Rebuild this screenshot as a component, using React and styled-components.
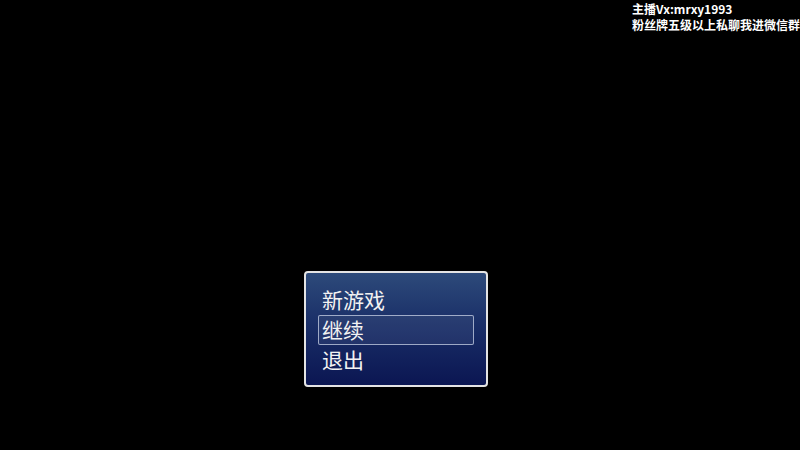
import React from 'react';
import styled, { createGlobalStyle } from 'styled-components';

const GlobalStyle = createGlobalStyle`
  html, body {
    margin: 0;
    padding: 0;
    background: #000;
  }
`;

const Screen = styled.div`
  width: 800px;
  height: 450px;
  background: #000;
  display: flex;
  flex-direction: column;
  overflow: hidden;
  font-family: "Noto Sans CJK SC", "Noto Sans", sans-serif;
`;

const Caption = styled.div`
  align-self: flex-end;
  width: 168px;
  padding-top: 1px;
  color: #fff;
  font-size: 12px;
  font-weight: 700;
  line-height: 16px;
  white-space: nowrap;
`;

const Stage = styled.div`
  flex: 1;
  display: flex;
  align-items: flex-end;
  padding: 0 0 63px 304px;
`;

const Window = styled.div`
  width: 184px;
  height: 116px;
  box-sizing: border-box;
  border: 2px solid #e4e4e4;
  border-radius: 4px;
  background: linear-gradient(to bottom, #2d4a7a 0%, #1a2f68 45%, #0b1652 100%);
  padding: 12px 12px 10px 12px;
  display: flex;
  flex-direction: column;
`;

const Item = styled.div`
  height: 30px;
  box-sizing: border-box;
  padding: 0 0 2px 3px;
  display: flex;
  align-items: center;
  color: #f2f2f2;
  font-size: 21px;
  font-weight: 400;
  border-radius: 2px;
  border: 1px solid ${({ selected }) => (selected ? 'rgba(200,210,230,0.75)' : 'transparent')};
  background: ${({ selected }) => (selected ? 'rgba(255,255,255,0.06)' : 'transparent')};
`;

const items = ['新游戏', '继续', '退出'];

const App = () => {
  return (
    <>
      <GlobalStyle />
      <Screen>
        <Caption>
          <div>主播Vx:mrxy1993</div>
          <div>粉丝牌五级以上私聊我进微信群</div>
        </Caption>
        <Stage>
          <Window>
            {items.map((label, i) => (
              <Item key={label} selected={i === 1}>{label}</Item>
            ))}
          </Window>
        </Stage>
      </Screen>
    </>
  );
};

export default App;
